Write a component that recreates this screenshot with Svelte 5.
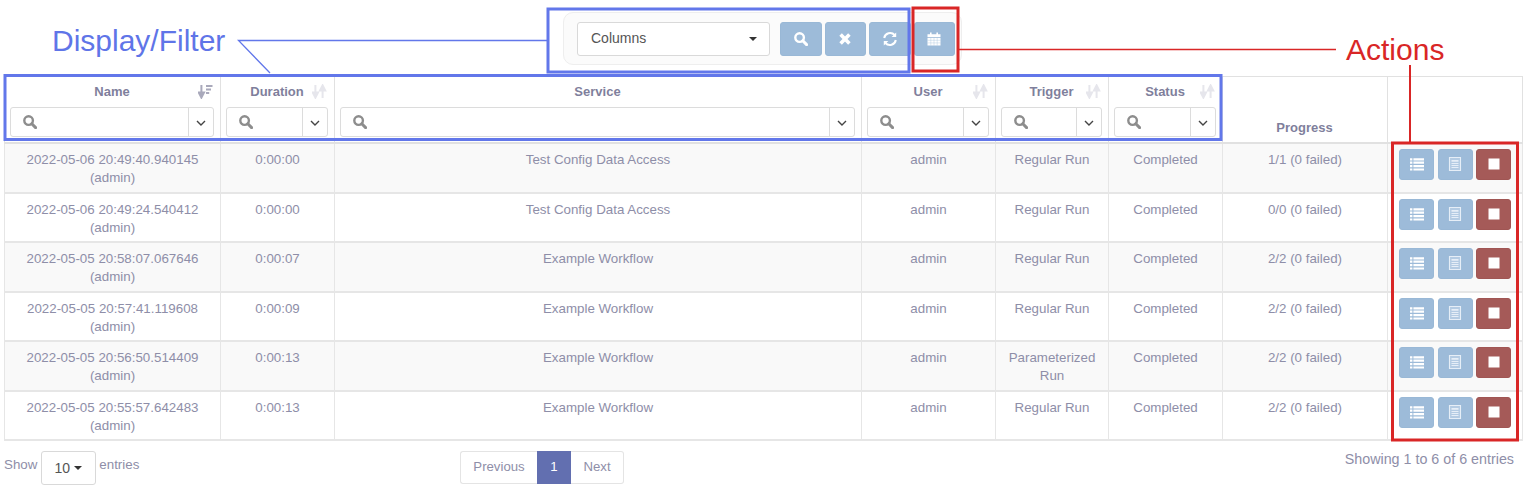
<script>
  const rows = [
    ["2022-05-06 20:49:40.940145", "0:00:00", "Test Config Data Access", "Regular Run", "1/1 (0 failed)"],
    ["2022-05-06 20:49:24.540412", "0:00:00", "Test Config Data Access", "Regular Run", "0/0 (0 failed)"],
    ["2022-05-05 20:58:07.067646", "0:00:07", "Example Workflow", "Regular Run", "2/2 (0 failed)"],
    ["2022-05-05 20:57:41.119608", "0:00:09", "Example Workflow", "Regular Run", "2/2 (0 failed)"],
    ["2022-05-05 20:56:50.514409", "0:00:13", "Example Workflow", "Parameterized Run", "2/2 (0 failed)"],
    ["2022-05-05 20:55:57.642483", "0:00:13", "Example Workflow", "Regular Run", "2/2 (0 failed)"]
  ];
  const heads = [
    { name: "Name", active: true, sort: true },
    { name: "Duration", sort: true },
    { name: "Service", sort: false },
    { name: "User", sort: true },
    { name: "Trigger", sort: true },
    { name: "Status", sort: true }
  ];
</script>

{#snippet search()}
  <svg class="ico" viewBox="0 0 14 14" aria-hidden="true"><circle cx="5.6" cy="5.6" r="4.3" fill="none" stroke="currentColor" stroke-width="2.4"/><path d="M8.8 8.8 12.6 12.6" stroke="currentColor" stroke-width="3" stroke-linecap="round"/></svg>
{/snippet}

{#snippet sortIcon(active)}
  <svg class="sort" class:active viewBox="0 0 15 15" aria-hidden="true">
    <path d="M3.4 1v9M.8 8.6 3.4 13.6 6 8.6z" stroke="currentColor" stroke-width="2" fill="currentColor"/>
    {#if active}
      <path d="M8 2h6.5M8 5.5h5M8 9h3.2" stroke="currentColor" stroke-width="2.2"/>
    {:else}
      <path d="M10.6 14V5M8 6.4 10.6 1.4 13.2 6.4z" stroke="currentColor" stroke-width="2" fill="currentColor"/>
    {/if}
  </svg>
{/snippet}

<div class="page">
  <div class="toolbar-wrap">
    <div class="toolbar">
      <div class="select"><span>Columns</span><i class="caret"></i></div>
      <div class="tbtns">
        <button class="btn tb" aria-label="Search">{@render search()}</button>
        <button class="btn tb" aria-label="Clear">
          <svg class="ico" viewBox="0 0 14 14"><path d="M2.6 2.6 11.4 11.4M11.4 2.6 2.6 11.4" stroke="currentColor" stroke-width="3.6"/></svg>
        </button>
        <button class="btn tb" aria-label="Refresh">
          <svg class="ico large" viewBox="0 0 16 16"><path d="M2.2 7A6 6 0 0 1 12.6 4M13.8 9A6 6 0 0 1 3.4 12" fill="none" stroke="currentColor" stroke-width="2"/><path d="M14.2 1.4V6H9.6zM1.8 14.6V10H6.4z" fill="currentColor"/></svg>
        </button>
        <button class="btn tb" aria-label="Calendar">
          <svg class="ico large" viewBox="0 0 16 16"><path d="M1.5 3.2h13v2.8h-13zM4 1.5h1.6v2H4zM10.4 1.5H12v2h-1.6z" fill="currentColor"/><rect x="1.5" y="6.8" width="13" height="7.7" fill="currentColor"/><path d="M1.5 9.3h13M1.5 11.9h13M4.8 6.8v7.7M8 6.8v7.7M11.2 6.8v7.7" stroke="#9dbbd9" stroke-width=".35"/></svg>
        </button>
      </div>
    </div>
  </div>

  <table>
    <colgroup>
      <col class="w1"/><col class="w2"/><col class="w3"/><col class="w4"/><col class="w5"/><col class="w6"/><col class="w7"/><col class="w8"/>
    </colgroup>
    <thead>
      <tr>
        {#each heads as h}
          <th>
            <div class="title">
              <span>{h.name}</span>
              {#if h.sort}{@render sortIcon(h.active)}{/if}
            </div>
            <div class="filter">
              <div class="fi">{@render search()}</div>
              <div class="fa"><svg viewBox="0 0 10 6" class="chev" aria-hidden="true"><path d="M1 1 5 5 9 1" fill="none" stroke="#444" stroke-width="1.4"/></svg></div>
            </div>
          </th>
        {/each}
        <th class="bottom">Progress</th>
        <th></th>
      </tr>
    </thead>
    <tbody>
      {#each rows as r}
        <tr>
          <td>{r[0]}<br/>(admin)</td>
          <td>{r[1]}</td>
          <td>{r[2]}</td>
          <td>admin</td>
          <td>{r[3]}</td>
          <td>Completed</td>
          <td>{r[4]}</td>
          <td class="actions">
            <div class="act-row">
              <button class="btn act" aria-label="Results">
                <svg class="ico" viewBox="0 0 14 14"><path d="M0 1.2h2.4v2.2H0zM3.4 1.2H14v2.2H3.4zM0 4.6h2.4v2.2H0zM3.4 4.6H14v2.2H3.4zM0 8h2.4v2.2H0zM3.4 8H14v2.2H3.4zM0 11.4h2.4v2H0zM3.4 11.4H14v2H3.4z" fill="currentColor"/></svg>
              </button>
              <button class="btn act" aria-label="Logs">
                <svg class="ico" viewBox="0 0 14 14"><path d="M1.5.5h11v13h-11z" fill="#b4cbe3" stroke="#e6eef7" stroke-width="1.1"/><path d="M3.5 3h7v1.8h-7zM3.5 6h7v1H3.5zM3.5 8h7v1H3.5zM3.5 10h7v1H3.5z" fill="#e6eef7"/></svg>
              </button>
              <button class="btn act stop" aria-label="Stop">
                <svg class="ico" viewBox="0 0 14 14"><rect x="1.5" y="1.5" width="11" height="11" fill="currentColor"/></svg>
              </button>
            </div>
          </td>
        </tr>
      {/each}
    </tbody>
  </table>

  <div class="footer">
    <div class="length">
      <span>Show</span>
      <div class="len-select">10<i class="caret small"></i></div>
      <span>entries</span>
    </div>
    <div class="pager">
      <span class="pg prev">Previous</span><span class="pg cur">1</span><span class="pg next">Next</span>
    </div>
    <div class="info">Showing 1 to 6 of 6 entries</div>
  </div>

  <svg class="notes" viewBox="0 0 1524 495" aria-hidden="true">
    <g fill="none" stroke="#6277ea">
      <rect x="548" y="9" width="361" height="63" stroke-width="3"/>
      <rect x="5" y="75.5" width="1216" height="64" stroke-width="3"/>
      <path d="M547 40.5H238.5L270 73" stroke-width="1.3"/>
    </g>
    <g fill="none" stroke="#d92626">
      <rect x="913" y="8" width="45" height="63" stroke-width="3"/>
      <rect x="1392.5" y="143" width="125" height="297" stroke-width="3"/>
      <path d="M959 49.5H1336" stroke-width="1.3"/>
      <path d="M1410 65V142" stroke-width="2"/>
    </g>
  </svg>
  <div class="label blue">Display/Filter</div>
  <div class="label red">Actions</div>
</div>

<style>
  :global(body) { margin: 0; background: #fff; }
  .page {
    position: relative;
    width: 1524px;
    height: 495px;
    overflow: hidden;
    font-family: "Liberation Sans", Arial, sans-serif;
    font-size: 13.33px;
    line-height: 18.5px;
    color: #8e8ea8;
  }
  .toolbar-wrap { display: flex; justify-content: center; padding-top: 12px; padding-left: 1px; }
  .toolbar {
    display: flex;
    align-items: center;
    gap: 10px;
    box-sizing: border-box;
    width: 399px;
    height: 53px;
    padding: 0 6px 0 13px;
    background: #fbfbfb;
    border: 1px solid #eeeeee;
    border-radius: 10px;
  }
  .select {
    box-sizing: border-box;
    width: 194px;
    height: 34px;
    display: flex;
    align-items: center;
    justify-content: space-between;
    padding: 0 12px 0 13px;
    background: #fff;
    border: 1px solid #d9d9d9;
    border-radius: 3px;
    font-size: 14px;
    color: #555;
  }
  .caret {
    width: 0; height: 0;
    border-left: 4.5px solid transparent;
    border-right: 4.5px solid transparent;
    border-top: 4.5px solid #333;
  }
  .caret.small { border-left-width: 4px; border-right-width: 4px; border-top-width: 4px; margin-left: 4px; }
  .tbtns { display: flex; gap: 3px; }
  .btn {
    display: flex;
    align-items: center;
    justify-content: center;
    padding: 0;
    border: 1px solid #99b8d6;
    border-radius: 3px;
    background: #9dbbd9;
    color: #fff;
  }
  .tb { width: 41.5px; height: 34px; }
  .ico { width: 14px; height: 14px; display: block; }
  .ico.large { width: 16px; height: 16px; }

  table {
    width: 1519px;
    margin: 11px 0 0 4px;
    border-collapse: collapse;
    table-layout: fixed;
  }
  .w1 { width: 216px; } .w2 { width: 114px; } .w3 { width: 527px; } .w4 { width: 134px; }
  .w5 { width: 113px; } .w6 { width: 114px; } .w7 { width: 165px; } .w8 { width: 135px; }
  th {
    position: relative;
    height: 66px;
    padding: 0 6px 0 5px;
    box-sizing: border-box;
    vertical-align: top;
    border: 1px solid #e1e1e1;
    border-bottom: 2px solid #e1e1e1;
    font-size: 13px;
    font-weight: 700;
    color: #7f7f9c;
  }
  th.bottom { vertical-align: bottom; padding-bottom: 4px; line-height: 18.5px; }
  .title { position: relative; height: 30px; line-height: 30px; text-align: center; }
  .sort { position: absolute; right: 1px; top: 7px; width: 15px; height: 15px; color: #e6e6ec; }
  .sort.active { color: #a9a9bb; }
  .filter {
    display: flex;
    height: 30px;
    box-sizing: border-box;
    background: #fff;
    border: 1px solid #dcdcdc;
    border-radius: 3px;
  }
  .fi { flex: 1; display: flex; align-items: center; padding-left: 12px; color: #8d8d8d; }
  .fa { width: 24px; flex: none; display: flex; align-items: center; justify-content: center; border-left: 1px solid #dcdcdc; }
  .chev { width: 10px; height: 6px; display: block; margin-top: 2px; }

  td {
    padding: 7px 8px 0;
    box-sizing: border-box;
    vertical-align: top;
    text-align: center;
    border: 1px solid #e6e6e6;
    border-bottom-width: 2px;
  }
  tbody tr:nth-child(odd) { height: 50px; }
  tbody tr:nth-child(even) { height: 49px; }
  tbody tr:nth-child(1) td, tbody tr:nth-child(3) td, tbody tr:nth-child(5) td { background: #f9f9f9; }
  td.actions { padding: 5px 0 0 11px; }
  .act-row { display: flex; gap: 3.5px; }
  .act { width: 35px; height: 31px; flex: none; }
  .stop { background: #a55a58; border-color: #a05654; }

  .footer {
    display: grid;
    grid-template-columns: 456px 1fr auto;
    padding: 10px 10px 0 4px;
    align-items: start;
  }
  .length { display: flex; align-items: flex-start; gap: 3.5px; }
  .length span { padding-top: 5px; }
  .len-select {
    box-sizing: border-box;
    width: 55px;
    height: 34px;
    display: flex;
    align-items: center;
    justify-content: center;
    padding-top: 1px;
    font-size: 14px;
    color: #555;
    background: #fff;
    border: 1px solid #d9d9d9;
    border-radius: 3px;
  }
  .pager { display: flex; height: 33px; }
  .pg {
    display: flex;
    align-items: center;
    justify-content: center;
    box-sizing: border-box;
    border: 1px solid #e4e4e4;
    background: #fff;
    font-size: 13.2px;
  }
  .prev { width: 77px; border-right: 0; border-radius: 3px 0 0 3px; }
  .cur { width: 34px; background: #626fb0; border-color: #626fb0; color: #fff; }
  .next { width: 53px; border-left: 0; border-radius: 0 3px 3px 0; }
  .info { margin-top: -1px; font-size: 14.3px; }

  .notes { position: absolute; left: 0; top: 0; width: 1524px; height: 495px; pointer-events: none; }
  .label { position: absolute; white-space: nowrap; line-height: 36px; }
  .blue { left: 52px; top: 23px; font-size: 30px; color: #5f75e8; }
  .red { left: 1346px; top: 32px; font-size: 30px; color: #d92626; }
</style>
